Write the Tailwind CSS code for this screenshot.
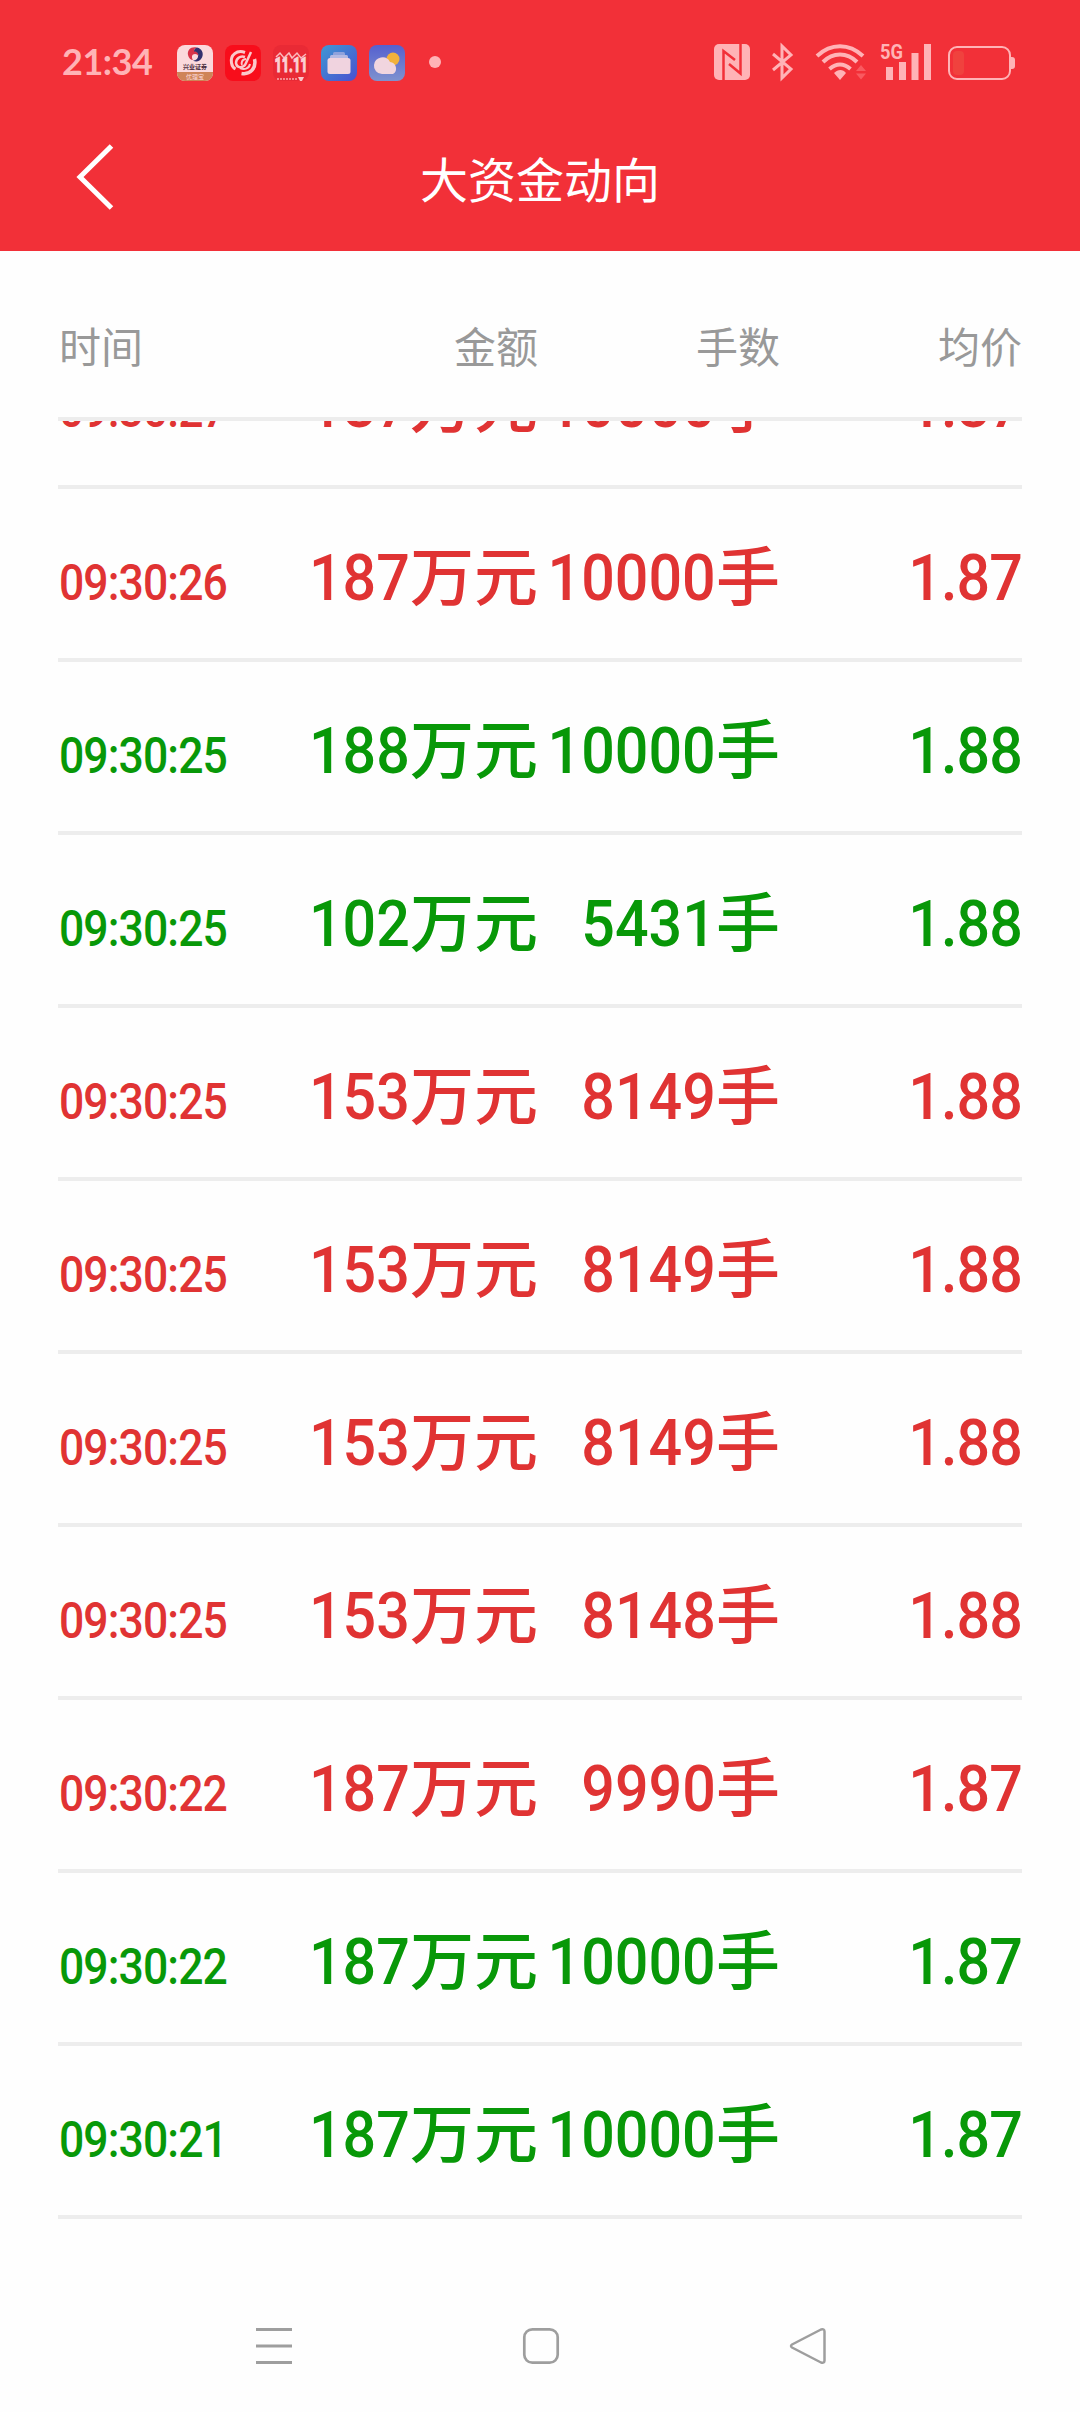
<!DOCTYPE html>
<html lang="zh-CN">
    <head>
        <meta charset="UTF-8" />
        <meta name="viewport" content="width=device-width, initial-scale=1.0" />
        <title>大资金动向</title>
        <script src="https://cdn.jsdelivr.net/npm/@tailwindcss/browser@4"></script>
    </head>
    <body class="bg-[#fefefe] font-[Roboto,'Noto_Sans_CJK_SC',sans-serif]">
        <div class="w-[1080px] h-[2412px] flex flex-col overflow-hidden">
            <header class="h-[251px] shrink-0 bg-[#f23038] flex flex-col">
                <!-- Status bar -->
                <div class="h-[126px] flex items-center justify-between pl-[62px] pr-[65px]">
                    <div class="flex items-center gap-3">
                        <span class="w-[103px] pb-1 font-[Lato,sans-serif] font-bold text-[36px] tracking-[-0.500px] leading-[44px] text-[#ffb3b6]">21:34</span>
                        <!-- Notification icons -->
                        <svg class="size-9" viewBox="0 0 36 36">
                            <defs>
                                <clipPath id="tile"><rect width="36" height="36" rx="8" /></clipPath>
                                <linearGradient id="blue" x1="0" y1="0" x2="1" y2="1">
                                    <stop offset="0" stop-color="#3f97d4" />
                                    <stop offset="1" stop-color="#4a50cf" />
                                </linearGradient>
                                <linearGradient id="sky" x1="0" y1="0" x2="0" y2="1">
                                    <stop offset="0" stop-color="#5560cf" />
                                    <stop offset="1" stop-color="#7f92cf" />
                                </linearGradient>
                            </defs>
                            <g clip-path="url(#tile)">
                                <rect width="36" height="36" fill="#fbd9dc" />
                                <rect y="27" width="36" height="9" fill="#cf8458" />
                                <path d="M20 2.500C14 1 10 5 11 10c.5 3 3 5 5 5-2-3-1-6 2-6 2 0 3 1 3 2 1-3-1-5-4-5 0-2 1-3 3-3.500z" fill="#d8344a" />
                                <path d="M20 2.500c5 1 7 6 5 10-2 4-6 5-9 3 3 0 5-2 5-4 1-3-1-5-4-5 0-2 1-3.500 3-4z" fill="#33306e" />
                            </g>
                            <text x="18" y="23.500" font-size="6" font-weight="700" text-anchor="middle" fill="#4a2c3c">兴业证券</text>
                            <text x="18" y="33.500" font-size="6" text-anchor="middle" fill="#fbd9dc">优理宝</text>
                        </svg>
                        <svg class="size-9" viewBox="0 0 36 36" fill="none" stroke="#fbc8cb">
                            <rect width="36" height="36" rx="8" fill="#f80d1b" stroke="none" />
                            <path d="M20 7.500C12 4.500 5 10 6.500 18c.5 3 2 5 4 6" stroke-width="3" />
                            <path d="M29.500 14c2 9-4 16-13 14.500" stroke-width="3.500" />
                            <path d="M20 12c-5-2-9 2-9 6 1 6 8 5 10 0l5-11" stroke-width="2.500" />
                            <path d="M21 14c-4 0-5 4-4 6M25 19c-1 5-6 6-10 4" stroke-width="2" />
                        </svg>
                        <svg class="size-9" viewBox="0 0 36 36">
                            <rect width="36" height="36" rx="8" fill="#e92a35" />
                            <path d="M3 12l4-4 4 5 5-5 3 5 5-5 4 5 5-4" fill="none" stroke="#fbb9bc" stroke-width="1.500" />
                            <text x="18" y="27" font-size="21" font-weight="900" text-anchor="middle" textLength="33" lengthAdjust="spacingAndGlyphs" fill="#fbd0d3" stroke="#fbd0d3">11.11</text>
                            <path d="M4 34h20" stroke="#f7a9ac" stroke-width="1.500" stroke-dasharray="2 1" />
                            <path d="M25 32h6l-2 4h-2z" fill="#fbc8cb" />
                        </svg>
                        <svg class="size-9" viewBox="0 0 36 36">
                            <rect width="36" height="36" rx="8" fill="url(#blue)" />
                            <rect x="12" y="7" width="12" height="5" rx="1.500" fill="#8fa2dc" />
                            <rect x="9" y="10" width="18" height="6" rx="1.500" fill="#b5b9e2" />
                            <rect x="6.500" y="13" width="23" height="16" rx="2.500" fill="#f0d3df" />
                        </svg>
                        <svg class="size-9" viewBox="0 0 36 36">
                            <rect width="36" height="36" rx="8" fill="url(#sky)" />
                            <circle cx="24" cy="14" r="6.500" fill="#f2b13c" />
                            <path d="M13 29a8 8 0 0 1-8-9 8.500 8.500 0 0 1 16-3 6.500 6.500 0 0 1 3 12z" fill="#f1d5df" />
                        </svg>
                        <span class="ml-3 mb-0.5 size-3 rounded-full bg-[#ffb3b6]"></span>
                    </div>
                    <!-- System icons -->
                    <svg class="w-[302px] h-[38px] mb-0.5 overflow-visible" viewBox="713 43 302 38" fill="none" stroke="#ffb3b6">
                        <rect x="714" y="44" width="36" height="36" rx="5" fill="#ffb3b6" stroke="none" />
                        <path d="M723.500 80V51L735 60M740.500 44v29.500L729 64" stroke="#f23038" stroke-width="2.500" />
                        <path d="M773 54l18 15-9 9V46l9 9-18 15" stroke-width="3" />
                        <path d="M817 56c14-13 32-13 46 0M823 62c10-10 24-10 34 0M829.500 69c7-6 14-6 21 0" stroke-width="4" />
                        <path d="M834 73c4-4 9-4 12 0l-6 7z" fill="#ffb3b6" stroke="none" />
                        <path d="M856 71l5-6 5 6zM856 73.500l5 6 5-6z" fill="#f95a60" stroke="none" />
                        <text x="880" y="58.500" font-size="21" font-weight="700" textLength="23" lengthAdjust="spacingAndGlyphs" fill="#ffb3b6" stroke="none">5G</text>
                        <path d="M886 67h7v13h-7zM899 62h7v18h-7zM911.500 53h7v27h-7zM924 44h7v36h-7z" fill="#ffb3b6" stroke="none" />
                        <rect x="949" y="47" width="61" height="32" rx="8" stroke-width="2" />
                        <rect x="953" y="51" width="11" height="24" rx="4" fill="#f0423e" stroke="none" />
                        <path d="M1011 57h1a3 3 0 0 1 3 3v6a3 3 0 0 1-3 3h-1z" fill="#ffb3b6" stroke="none" />
                    </svg>
                </div>
                <!-- Title bar -->
                <div class="h-[106px] grid grid-cols-[200px_1fr_200px] items-center">
                    <svg class="ml-[76px] mb-1 w-10 h-[68px]" viewBox="0 0 40 68" fill="none" stroke="#fff" stroke-width="5">
                        <path d="M35.500 3L4 34l31.500 31" />
                    </svg>
                    <h1 class="pt-1.5 text-center text-[48px] leading-none text-white">大资金动向</h1>
                </div>
            </header>

            <main class="flex flex-col px-[58px]">
                <div class="h-[170px] grid grid-cols-[240px_240px_242px_242px] items-center border-b-4 border-[#ededed] pt-[30px] text-[42px] text-[#999] leading-none text-right">
                    <span class="pl-px text-left">时间</span>
                    <span>金额</span>
                    <span>手数</span>
                    <span>均价</span>
                </div>
                <!-- Scrolled list, first row is partly hidden under the column titles -->
                <div class="h-[1798px] flex flex-col justify-end overflow-hidden" id="list"></div>
            </main>

            <!-- Navigation bar -->
            <nav class="mt-auto h-[132px] flex items-center justify-center gap-[229px] pl-px">
                <svg class="w-[38px] h-[38px]" viewBox="0 0 38 38" stroke="#9e9e9e" stroke-width="3">
                    <path d="M1 2.500h36M1 19h36M1 35.500h36" />
                </svg>
                <svg class="w-[38px] h-[38px]" viewBox="0 0 38 38" fill="none" stroke="#9e9e9e" stroke-width="2.700">
                    <rect x="2.300" y="2.300" width="33.400" height="33.400" rx="8" />
                </svg>
                <svg class="w-[38px] h-[38px]" viewBox="0 0 38 38" fill="none" stroke="#9e9e9e" stroke-width="2.500" stroke-linejoin="round">
                    <path d="M3 17.500L32 2.500q3.500-1 3.500 2v29q0 3-3.500 2L3 20.500q-2-1.500 0-3z" />
                </svg>
            </nav>
        </div>

        <script>
            const RED = "text-[#e03333]";
            const GREEN = "text-[#089808]";
            const rows = [
                ["09:30:27", "187", "10000", "1.87", RED],
                ["09:30:26", "187", "10000", "1.87", RED],
                ["09:30:25", "188", "10000", "1.88", GREEN],
                ["09:30:25", "102", "5431", "1.88", GREEN],
                ["09:30:25", "153", "8149", "1.88", RED],
                ["09:30:25", "153", "8149", "1.88", RED],
                ["09:30:25", "153", "8149", "1.88", RED],
                ["09:30:25", "153", "8148", "1.88", RED],
                ["09:30:22", "187", "9990", "1.87", RED],
                ["09:30:22", "187", "10000", "1.87", GREEN],
                ["09:30:21", "187", "10000", "1.87", GREEN],
            ];

            // digits are slightly condensed
            const number = (n) => `<span class="-ml-4 inline-block origin-right scale-x-[0.91]">${n}</span>`;

            document.getElementById("list").innerHTML = rows
                .map(
                    ([time, amount, lots, price, color]) => `
                <div class="h-[173px] shrink-0 grid grid-cols-[240px_240px_242px_242px] items-baseline border-b-4 border-[#ededed] pt-[56px] text-[65px] leading-[66px] font-medium text-right whitespace-nowrap ${color}">
                    <span class="pl-px text-left text-[50px] tracking-[-1px] origin-left scale-x-[0.890]">${time}</span>
                    <span>${number(amount)}<span class="text-[64px]">万元</span></span>
                    <span>${number(lots)}<span class="text-[64px]">手</span></span>
                    <span class="tracking-[-1px]">${number(price)}</span>
                </div>`
                )
                .join("");
        </script>
    </body>
</html>
